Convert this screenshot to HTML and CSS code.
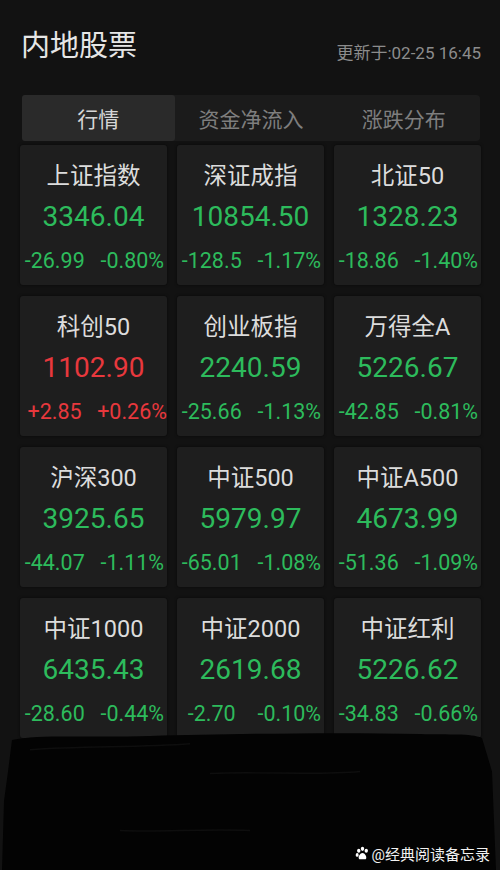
FILE: index.html
```html
<!DOCTYPE html>
<html lang="zh-CN">
<head>
    <meta charset="UTF-8">
    <meta name="viewport" content="width=device-width, initial-scale=1.0">
    <title>内地股票</title>
    <link rel="stylesheet" href="styles.css">
</head>
<body>

    <!-- HEADER -->
    <div class="header">
        <h1 class="title">内地股票</h1>
        <span class="updated">更新于:02-25 16:45</span>
    </div>

    <!-- TABS -->
    <div class="tabs">
        <div class="tab active">行情</div>
        <div class="tab">资金净流入</div>
        <div class="tab">涨跌分布</div>
    </div>

    <!-- INDEX CARDS -->
    <div class="grid">
        <div class="card down">
            <div class="name">上证指数</div>
            <div class="value">3346.04</div>
            <div class="change"><span>-26.99</span><span>-0.80%</span></div>
        </div>
        <div class="card down">
            <div class="name">深证成指</div>
            <div class="value">10854.50</div>
            <div class="change"><span>-128.5</span><span>-1.17%</span></div>
        </div>
        <div class="card down">
            <div class="name">北证50</div>
            <div class="value">1328.23</div>
            <div class="change"><span>-18.86</span><span>-1.40%</span></div>
        </div>

        <div class="card up">
            <div class="name">科创50</div>
            <div class="value">1102.90</div>
            <div class="change"><span>+2.85</span><span>+0.26%</span></div>
        </div>
        <div class="card down">
            <div class="name">创业板指</div>
            <div class="value">2240.59</div>
            <div class="change"><span>-25.66</span><span>-1.13%</span></div>
        </div>
        <div class="card down">
            <div class="name">万得全A</div>
            <div class="value">5226.67</div>
            <div class="change"><span>-42.85</span><span>-0.81%</span></div>
        </div>

        <div class="card down">
            <div class="name">沪深300</div>
            <div class="value">3925.65</div>
            <div class="change"><span>-44.07</span><span>-1.11%</span></div>
        </div>
        <div class="card down">
            <div class="name">中证500</div>
            <div class="value">5979.97</div>
            <div class="change"><span>-65.01</span><span>-1.08%</span></div>
        </div>
        <div class="card down">
            <div class="name">中证A500</div>
            <div class="value">4673.99</div>
            <div class="change"><span>-51.36</span><span>-1.09%</span></div>
        </div>

        <div class="card down">
            <div class="name">中证1000</div>
            <div class="value">6435.43</div>
            <div class="change"><span>-28.60</span><span>-0.44%</span></div>
        </div>
        <div class="card down">
            <div class="name">中证2000</div>
            <div class="value">2619.68</div>
            <div class="change"><span>-2.70</span><span>-0.10%</span></div>
        </div>
        <div class="card down">
            <div class="name">中证红利</div>
            <div class="value">5226.62</div>
            <div class="change"><span>-34.83</span><span>-0.66%</span></div>
        </div>
    </div>

    <!-- blacked out area at the bottom -->
    <svg class="scribble" viewBox="0 0 500 140" preserveAspectRatio="none">
        <path d="M12 8 C40 2 90 6 150 4 C230 2 330 0 420 2 C450 3 470 1 482 6 L492 40 L496 140 L2 140 L4 70 L8 40 Z" fill="#030303"/>
        <path d="M30 18 C80 14 140 16 190 12 M210 42 C260 40 320 44 360 40 M120 100 C160 102 200 98 250 100" stroke="#0e0e0e" stroke-width="1.5" fill="none"/>
    </svg>

    <div class="watermark">
        <svg class="paw" viewBox="0 0 16 16">
            <ellipse cx="4" cy="5" rx="1.8" ry="2.2" fill="#fff"/>
            <ellipse cx="8" cy="3" rx="1.8" ry="2.2" fill="#fff"/>
            <ellipse cx="12" cy="5" rx="1.8" ry="2.2" fill="#fff"/>
            <ellipse cx="2.3" cy="9.5" rx="1.6" ry="2" fill="#fff"/>
            <path d="M8 7.5 C5.5 7.5 3.5 11 4 13 C4.5 15 6.5 14 8 14 C9.5 14 11.5 15 12 13 C12.5 11 10.5 7.5 8 7.5 Z" fill="#fff"/>
        </svg>
        <span>@经典阅读备忘录</span>
    </div>

</body>
</html>
```

FILE: styles.css
```css
* { margin: 0; padding: 0; box-sizing: border-box; }

body {
    position: relative;
    width: 500px;
    height: 870px;
    overflow: hidden;
    background-color: #121212;
    color: #e0e0e0;
    font-family: Roboto, "Noto Sans CJK SC", sans-serif;
}

.header {
    display: flex;
    justify-content: space-between;
    align-items: baseline;
    padding: 26px 19px 0 21px;
}

.title {
    font-size: 29px;
    font-weight: normal;
    line-height: 40px;
    color: #e6e6e6;
}

.updated {
    font-size: 17px;
    color: #8c8c8c;
    position: relative;
    top: 3px;
}

.tabs {
    display: flex;
    margin: 29px 20px 0 22px;
    height: 46px;
    background: #1b1b1b;
    border-radius: 4px;
}

.tab {
    flex: 1;
    display: flex;
    justify-content: center;
    align-items: center;
    font-size: 21px;
    color: #7e7e7e;
    border-radius: 3px;
}

.tab.active {
    background: #2a2a2a;
    color: #d6d6d6;
}

.grid {
    display: grid;
    grid-template-columns: repeat(3, 147px);
    grid-auto-rows: 140px;
    column-gap: 10px;
    row-gap: 11px;
    margin: 4px 0 0 20px;
}

.card {
    background: #1e1e1e;
    border-radius: 3px;
    text-align: center;
    padding-top: 16px;
    box-shadow: 0 0 3px rgba(0, 0, 0, 0.6);
}

.name {
    font-size: 23.5px;
    line-height: 30px;
    color: #dcdcdc;
}

.value {
    margin-top: 8px;
    font-size: 28px;
    line-height: 36px;
}

.change {
    display: grid;
    grid-template-columns: 1fr 1fr;
    column-gap: 8px;
    margin-top: 13px;
    font-size: 21.5px;
    line-height: 26px;
    white-space: nowrap;
}

.down .value, .down .change { color: #2dbb5c; }
.up .value, .up .change { color: #e8383d; }

/* redaction over the lower rows */
.scribble {
    position: absolute;
    left: 0;
    top: 732px;
    width: 500px;
    height: 138px;
}

.watermark {
    position: absolute;
    right: 10px;
    bottom: 6px;
    display: flex;
    align-items: center;
    gap: 2px;
    font-size: 15px;
    color: #f2f2f2;
}

.paw {
    width: 15px;
    height: 15px;
}
```
